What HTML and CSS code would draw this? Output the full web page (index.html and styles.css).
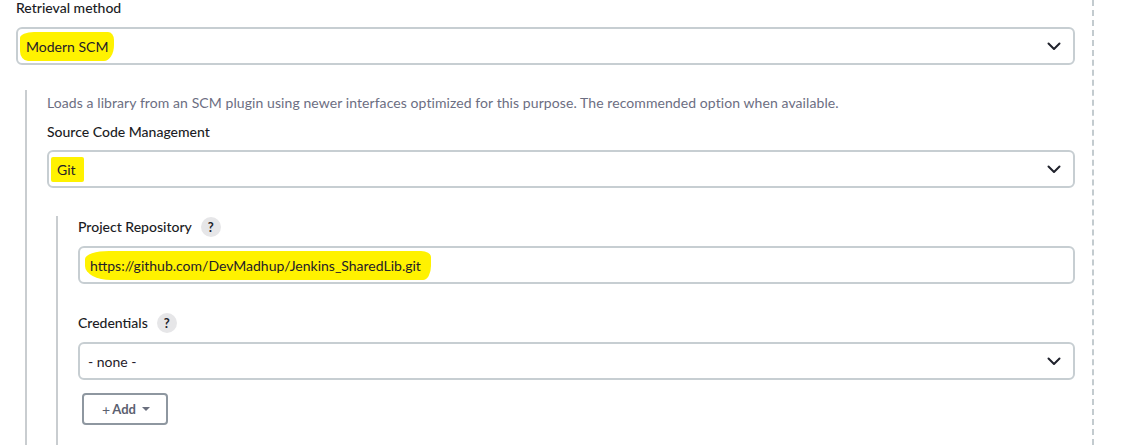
FILE: index.html
```html
<!DOCTYPE html>
<html>
<head>
<meta charset="utf-8">
<link rel="stylesheet" href="styles.css">
</head>
<body>
<div class="page">
  <div class="form">
    <div class="field">
      <div class="label">Retrieval method</div>
      <div class="select">
        <span class="hl hl-modern">Modern SCM</span>
        <svg class="chev" width="14" height="9" viewBox="0 0 14 9"><path d="M1.5 1.5 L7 7 L12.5 1.5" fill="none" stroke="#20222c" stroke-width="2" stroke-linecap="round" stroke-linejoin="round"/></svg>
      </div>
    </div>
    <div class="nested nested-1">
      <div class="desc">Loads a library from an SCM plugin using newer interfaces optimized for this purpose. The recommended option when available.</div>
      <div class="field">
        <div class="label">Source Code Management</div>
        <div class="select">
          <span class="hl hl-git">Git</span>
          <svg class="chev" width="14" height="9" viewBox="0 0 14 9"><path d="M1.5 1.5 L7 7 L12.5 1.5" fill="none" stroke="#20222c" stroke-width="2" stroke-linecap="round" stroke-linejoin="round"/></svg>
        </div>
      </div>
      <div class="nested nested-2">
        <div class="field">
          <div class="label">Project Repository <span class="help">?</span></div>
          <div class="input"><span class="hl hl-url">https://github.com/DevMadhup/Jenkins_SharedLib.git</span></div>
        </div>
        <div class="field field-cred">
          <div class="label">Credentials <span class="help">?</span></div>
          <div class="select">
            <span>- none -</span>
            <svg class="chev" width="14" height="9" viewBox="0 0 14 9"><path d="M1.5 1.5 L7 7 L12.5 1.5" fill="none" stroke="#20222c" stroke-width="2" stroke-linecap="round" stroke-linejoin="round"/></svg>
          </div>
          <button class="add"><span class="plus">+</span> Add <span class="caret"></span></button>
        </div>
      </div>
    </div>
  </div>
  <div class="divider"></div>
</div>
</body>
</html>
```

FILE: styles.css
```css
html, body {
  margin: 0;
  padding: 0;
  background: #ffffff;
}
body {
  font-family: Lato, "Noto Sans", sans-serif;
  font-size: 14px;
  color: #1f2029;
  overflow: hidden;
  height: 445px;
}
.page {
  display: flex;
  align-items: flex-start;
  padding-left: 16px;
}
.form {
  width: 1059px;
  flex: none;
}
.divider {
  margin-left: 17px;
  width: 0;
  height: 445px;
  border-left: 2px dashed #c3cbcf;
}
.field {
  display: flex;
  flex-direction: column;
}
.label {
  font-weight: 500;
  line-height: 18px;
  display: flex;
  align-items: center;
  gap: 9px;
  color: #1b1c24;
}
.field > .label {
  margin-bottom: 9px;
}
.form > .field > .label {
  margin-top: -1px;
  margin-bottom: 10px;
}
.select, .input {
  box-sizing: border-box;
  height: 38px;
  border: 2px solid #c7ced2;
  border-radius: 6px;
  display: flex;
  align-items: center;
  padding-left: 8px;
  padding-right: 12px;
  position: relative;
  background: #fff;
}
.select .chev {
  margin-left: auto;
  margin-top: 1px;
}
.hl {
  background: #fff200;
  position: relative;
}
.hl-modern {
  margin-left: -6px;
  padding: 6px 6px 6px 6px;
  border-radius: 14px 6px 10px 8px / 6px 8px 16px 10px;
}
.hl-git {
  margin-left: -6px;
  padding: 4px 8px 4px 6px;
  border-radius: 2px;
}
.hl-url {
  margin-left: -3px;
  padding: 6px 10px 6px 5px;
  border-radius: 24px 10px 8px 26px / 8px 6px 14px 14px;
}
.nested {
  border-left: 2px solid #c9cdd0;
}
.nested-1 {
  margin-left: 9px;
  margin-top: 25px;
  padding-left: 20px;
  padding-top: 4px;
}
.desc {
  color: #6c6e82;
  line-height: 18px;
  margin-bottom: 11px;
  letter-spacing: 0.08px;
}
.nested-1 > .field > .label {
  margin-bottom: 9px;
}
.nested-2 {
  margin-left: 9px;
  margin-top: 28px;
  padding-left: 20px;
  padding-top: 1px;
  padding-bottom: 20px;
}
.help {
  display: inline-flex;
  align-items: center;
  justify-content: center;
  width: 20px;
  height: 20px;
  border-radius: 50%;
  background: #e6e6e8;
  color: #22232b;
  font-size: 13px;
  font-weight: 700;
}
.field-cred {
  margin-top: 29px;
}
.add {
  margin-top: 13px;
  margin-left: 4px;
  width: 86px;
  height: 32px;
  box-sizing: border-box;
  border: 2px solid #8e97a0;
  border-radius: 4px;
  background: #fff;
  font-family: Lato, "Noto Sans", sans-serif;
  font-size: 13px;
  font-weight: 700;
  color: #5b6070;
  display: flex;
  align-items: center;
  justify-content: center;
  gap: 2px;
  padding: 0 0 0 2px;
}
.add .plus {
  font-weight: 400;
  font-size: 14px;
}
.caret {
  width: 0;
  height: 0;
  border-left: 4px solid transparent;
  border-right: 4px solid transparent;
  border-top: 4px solid #6a6f7e;
  margin-left: 4px;
}
```
